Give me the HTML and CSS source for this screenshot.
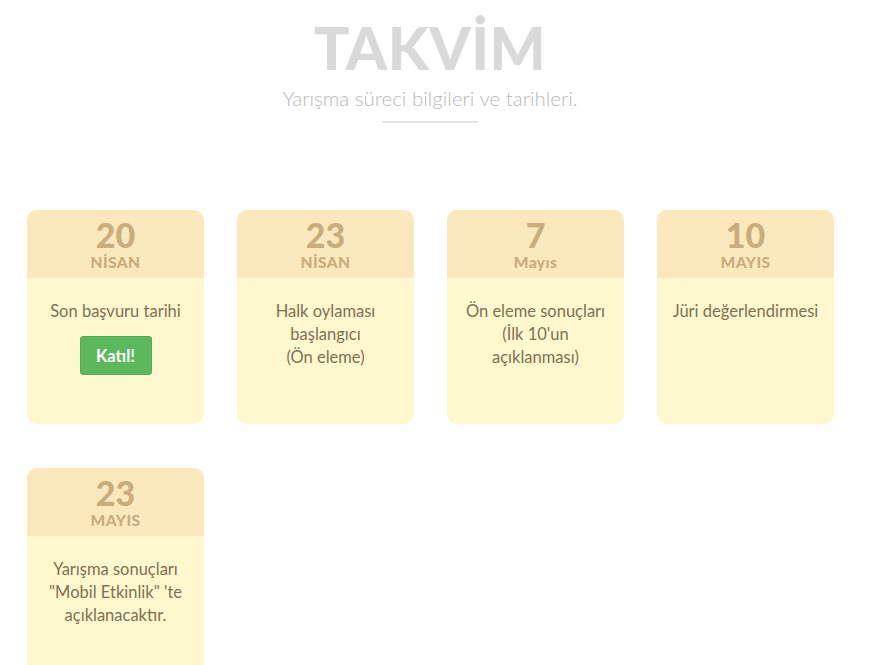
FILE: index.html
```html
<!DOCTYPE html>
<html lang="tr">
<head>
<meta charset="utf-8">
<title>Takvim</title>
<link rel="stylesheet" href="styles.css">
</head>
<body>
<section class="page">
  <header class="intro">
    <h1 class="title">TAKVİM</h1>
    <p class="subtitle">Yarışma süreci bilgileri ve tarihleri.</p>
    <div class="rule"></div>
  </header>
  <div class="grid">
    <div class="card">
      <div class="card-head"><div class="day">20</div><div class="month">NİSAN</div></div>
      <div class="card-body">
        <p>Son başvuru tarihi</p>
        <a class="btn" href="#">Katıl!</a>
      </div>
    </div>
    <div class="card">
      <div class="card-head"><div class="day">23</div><div class="month">NİSAN</div></div>
      <div class="card-body"><p>Halk oylaması<br>başlangıcı<br>(Ön eleme)</p></div>
    </div>
    <div class="card">
      <div class="card-head"><div class="day">7</div><div class="month">Mayıs</div></div>
      <div class="card-body"><p>Ön eleme sonuçları<br>(İlk 10'un<br>açıklanması)</p></div>
    </div>
    <div class="card">
      <div class="card-head"><div class="day">10</div><div class="month">MAYIS</div></div>
      <div class="card-body"><p>Jüri değerlendirmesi</p></div>
    </div>
    <div class="card">
      <div class="card-head"><div class="day">23</div><div class="month">MAYIS</div></div>
      <div class="card-body"><p>Yarışma sonuçları<br>"Mobil Etkinlik" 'te<br>açıklanacaktır.</p></div>
    </div>
  </div>
</section>
</body>
</html>
```
FILE: styles.css
```css
html, body {
  margin: 0;
  padding: 0;
  background: #fff;
  font-family: Lato, "Open Sans", sans-serif;
}
.page {
  width: 860px;
}
.intro {
  text-align: center;
  padding-top: 14px;
}
.title {
  margin: 0;
  font-size: 59px;
  line-height: 68px;
  font-weight: 900;
  color: #d9d9d9;
  letter-spacing: 0.5px;
}
.subtitle {
  margin: 3px 0 0;
  font-size: 20.5px;
  line-height: 26px;
  font-weight: 300;
  color: #b8b8b8;
}
.rule {
  width: 96px;
  height: 2px;
  background: #e2e2e2;
  margin: 10px auto 0;
}
.grid {
  display: grid;
  grid-template-columns: repeat(4, 177px);
  column-gap: 33px;
  row-gap: 44px;
  padding: 87px 0 0 27px;
}
.card {
  height: 214px;
  border-radius: 10px;
  overflow: hidden;
  background: #fff8cf;
  display: flex;
  flex-direction: column;
}
.card-head {
  height: 68px;
  flex: none;
  background: #fbe8bc;
  color: #c8ad7f;
  text-align: center;
  font-weight: 900;
  padding-top: 9px;
  box-sizing: border-box;
}
.day {
  font-size: 34px;
  line-height: 31px;
}
.month {
  margin-top: 4px;
  font-size: 15.5px;
  line-height: 16px;
  letter-spacing: 0.4px;
}
.card-body {
  text-align: center;
  padding-top: 22px;
  color: #807052;
  font-size: 16.5px;
  line-height: 23px;
}
.card-body p {
  margin: 0;
}
.btn {
  display: inline-block;
  margin-top: 13px;
  width: 72px;
  height: 39px;
  line-height: 38px;
  box-sizing: border-box;
  background: #5cb85c;
  border: 1px solid #4cae4c;
  border-radius: 3px;
  color: #fff;
  font-weight: 700;
  font-size: 16.5px;
  text-decoration: none;
}
```
